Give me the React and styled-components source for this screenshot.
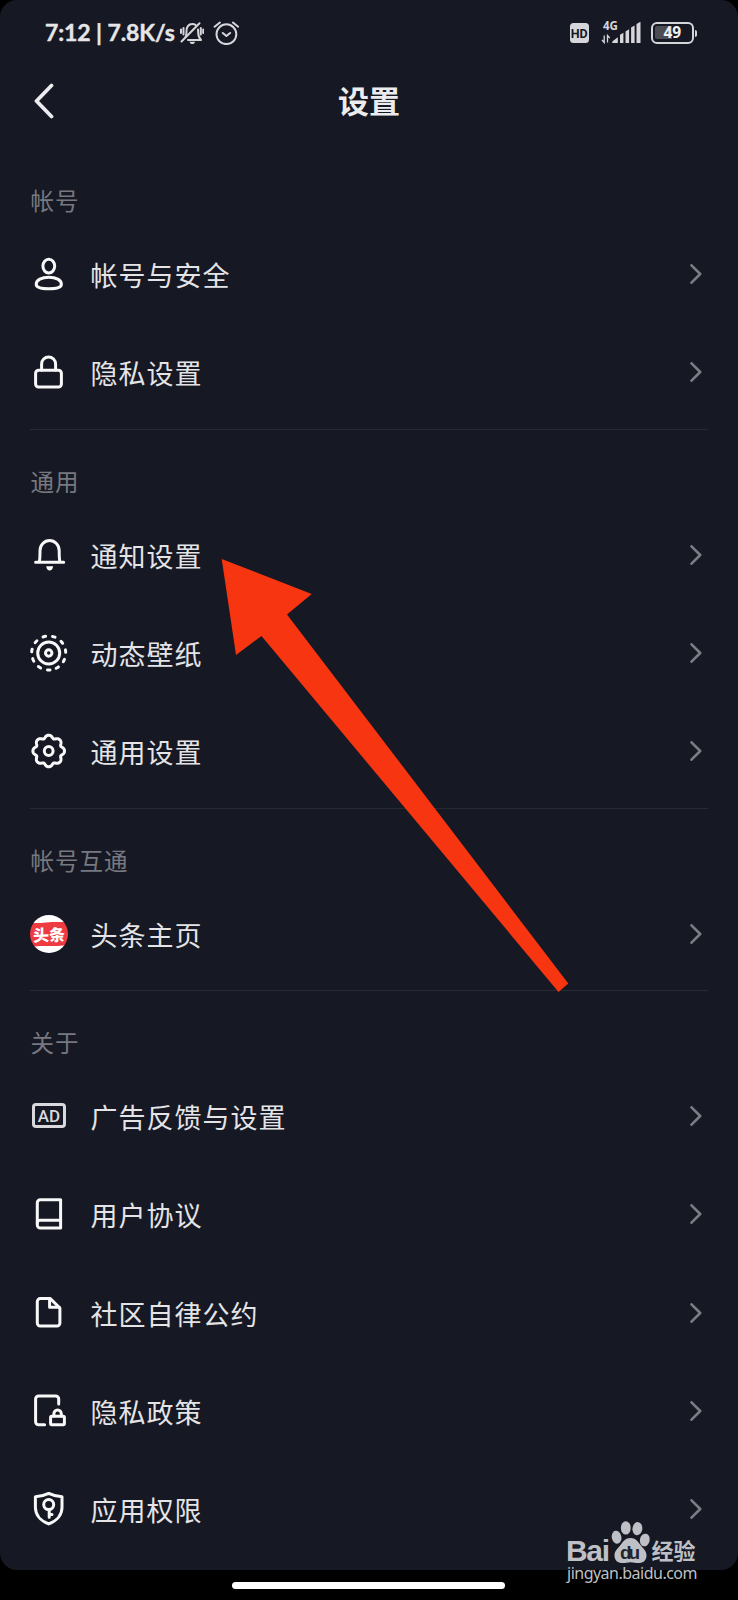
import React from "react";
import styled, { createGlobalStyle } from "styled-components";

const gearPath = () => {
  const points = [];
  for (let i = 0; i < 128; i++) {
    const a = (i / 128) * Math.PI * 2;
    const r = 14.6 + 1.4 * Math.cos(8 * a) - 0.2 * Math.cos(16 * a);
    points.push(
      `${(19.7 + r * Math.sin(a)).toFixed(2)} ${(20 - r * Math.cos(a)).toFixed(2)}`
    );
  }
  return `M${points.join("L")}Z`;
};

const icons = {
  user: (
    <>
      <ellipse cx="19.8" cy="12.1" rx="5.9" ry="6.9" />
      <path d="M19.8 23.2c7.2 0 12.6 2.9 12.6 7.1 0 3.7-5 4.5-12.6 4.5s-12.6-.8-12.6-4.5c0-4.2 5.4-7.1 12.6-7.1z" />
    </>
  ),
  lock: (
    <>
      <rect x="6.6" y="18.3" width="25.8" height="16.8" rx="3" />
      <path d="M12.6 18v-6a7 7 0 0 1 14 0V18" />
    </>
  ),
  bell: (
    <>
      <path d="M6.6 27.2h28.1M10.2 27c.8-2 .8-5.4.8-11.2a9.6 10.2 0 0 1 19.2 0c0 5.8 0 9.2.8 11.2" />
      <path d="M17.2 31.2h6.9c-.4 2.9-1.7 4.2-3.45 4.2s-3-1.3-3.45-4.2z" fill="#fff" stroke="none" />
    </>
  ),
  wallpaper: (
    <>
      <circle cx="19.7" cy="20" r="11" />
      <circle cx="19.7" cy="20" r="3.2" />
      <circle
        cx="19.7"
        cy="20"
        r="17"
        strokeDasharray="2.6 7.11"
        transform="rotate(85.6 19.7 20)"
      />
    </>
  ),
  gear: (
    <>
      <path d={gearPath()} />
      <circle cx="19.7" cy="20" r="4.4" />
    </>
  ),
  book: (
    <>
      <path d="M31.6 5.7H11.3a3 3 0 0 0-3 3v22.4a3 3 0 0 0 3 3h20.3z" />
      <path d="M8.3 28.9c0-1.6 1-2.7 2.8-2.7h20.5" />
    </>
  ),
  file: (
    <>
      <path d="M21.3 5.6h-10a3 3 0 0 0-3 3v21.5a3 3 0 0 0 3 3h16.6a3 3 0 0 0 3-3V15z" />
      <path d="M20.6 6v8.3h9.6" />
    </>
  ),
  fileLock: (
    <>
      <path d="M15.6 33.7h-6a3 3 0 0 1-3-3V7.9a3 3 0 0 1 3-3h17.1a3 3 0 0 1 3 3v5.2" />
      <rect x="21.6" y="25.3" width="13.8" height="8.4" rx="1.2" />
      <path d="M24.9 25v-2.2a3.7 3.8 0 0 1 7.4 0V25" />
    </>
  ),
  shield: (
    <>
      <path d="M19.7 4.4c-3.9 2-8.5 3-13.3 3.3v10.7c0 7.4 5.3 13.6 13.3 16.5 8-2.9 13.3-9.1 13.3-16.5V7.7c-4.8-.3-9.4-1.3-13.3-3.3z" />
      <circle cx="19.7" cy="15.6" r="5" />
      <path d="M20.2 21v7.3M20.6 25.4H23" />
    </>
  ),
};

const sections = [
  {
    title: "帐号",
    items: [
      { label: "帐号与安全", icon: "user" },
      { label: "隐私设置", icon: "lock" },
    ],
  },
  {
    title: "通用",
    items: [
      { label: "通知设置", icon: "bell" },
      { label: "动态壁纸", icon: "wallpaper" },
      { label: "通用设置", icon: "gear" },
    ],
  },
  {
    title: "帐号互通",
    items: [{ label: "头条主页", icon: "toutiao" }],
  },
  {
    title: "关于",
    items: [
      { label: "广告反馈与设置", icon: "ad" },
      { label: "用户协议", icon: "book" },
      { label: "社区自律公约", icon: "file" },
      { label: "隐私政策", icon: "fileLock" },
      { label: "应用权限", icon: "shield" },
    ],
  },
];

function ItemIcon({ name }) {
  if (name === "toutiao") {
    return (
      <IconSlot>
        <Toutiao>
          <span>头条</span>
        </Toutiao>
      </IconSlot>
    );
  }
  if (name === "ad") {
    return (
      <IconSlot>
        <AdBadge>AD</AdBadge>
      </IconSlot>
    );
  }
  return (
    <IconSlot>
      <LineIcon viewBox="0 0 40 40">{icons[name]}</LineIcon>
    </IconSlot>
  );
}

function StatusBar() {
  return (
    <Status>
      <Clock>7:12 | 7.8K/s</Clock>
      <StatusIcon $width={24} $gap={5} viewBox="0 0 24 24">
        <path d="M5.5 16c.9-1.5 1-3 1-5.5 0-4.8 2-7.5 5.8-7.5 1.2 0 2.3.3 3.2.9M18 8.5c.2 1 .2 1.8.2 3 0 3.5.8 5.5 2.8 7.5H8" />
        <path d="M1.5 20.5L19.5 2.3M1 8.5V12M3.5 7v6.5M20.8 7v6.500M23.2 8.5V12" />
        <path d="M9.5 20.7h5.6c-.4 1.7-1.5 2.3-2.8 2.3s-2.4-.6-2.8-2.3z" fill="#d6d6da" stroke="none" />
      </StatusIcon>
      <StatusIcon $width={26} $gap={9} viewBox="0 0 26 24">
        <circle cx="13.4" cy="13.2" r="9.9" />
        <path d="M9.8 12l3.6 3 3.7-3M1.6 5.700l5.300-4.200M25.200 5.700l-5.300-4.200" />
      </StatusIcon>
      <Spacer />
      <HdBadge>HD</HdBadge>
      <Signal viewBox="0 0 40 24">
        <text x="2" y="9.7">4G</text>
        <path d="M3.2 15.5v7L1 20M6.5 22.5v-7L8.7 18" fill="none" stroke="#d6d6da" strokeWidth="1.3" />
        <path d="M11.3 23v-1.5l5.500-4.200V23zM19 14.800l3.400-2v10.200H19zM24.500 11.400l3.600-2.200V23h-3.600zM30.100 7.500l3.500-2V23h-3.500zM35.500 4l4-2.300V23h-4z" />
      </Signal>
      <Battery>
        <span>49</span>
      </Battery>
      <BatteryTip />
    </Status>
  );
}

function Watermark() {
  return (
    <WatermarkSvg viewBox="0 0 140 66">
      <text x="3" y="41.4" className="bai" textLength="44">
        Bai
      </text>
      <ellipse cx="53.6" cy="17.2" rx="4.8" ry="6.5" transform="rotate(-12 53.6 17.2)" />
      <ellipse cx="62.8" cy="7.9" rx="4.9" ry="6.7" />
      <ellipse cx="74.4" cy="8.7" rx="4.9" ry="6.6" transform="rotate(8 74.4 8.7)" />
      <ellipse cx="81.8" cy="20" rx="4.9" ry="6.4" transform="rotate(12 81.8 20)" />
      <path d="M67.5 18c5 0 7.500 3.500 10 7s6 5.500 6 10.500-3.300 7.600-8 7.600c-3 0-5-.9-8-.9s-5 .9-8 .9c-4.700 0-8-2.600-8-7.600s3.500-7 6-10.500 5-7 10-7z" />
      <text x="57" y="38.5" className="du" textLength="20">
        du
      </text>
      <text x="88.5" y="39" className="cn" textLength="44">
        经验
      </text>
      <text x="4" y="59.2" className="url" textLength="130.5">
        jingyan.baidu.com
      </text>
    </WatermarkSvg>
  );
}

function App() {
  return (
    <Screen>
      <GlobalStyle />
      <Page>
        <StatusBar />
        <Header>
          <BackButton aria-label="返回">
            <svg width="20" height="36" viewBox="0 0 20 36">
              <path d="M17.5 2.500L2.500 18l15 15.500" />
            </svg>
          </BackButton>
          <h1>设置</h1>
        </Header>
        {sections.map(({ title, items }) => (
          <Section key={title}>
            <SectionTitle>{title}</SectionTitle>
            {items.map(({ label, icon }) => (
              <Row key={label}>
                <ItemIcon name={icon} />
                <Label>{label}</Label>
                <Chevron viewBox="0 0 12 20">
                  <path d="M1.5 1.300l8.700 8.700-8.700 8.700" />
                </Chevron>
              </Row>
            ))}
          </Section>
        ))}
      </Page>
      <HomeBar />
      <Arrow viewBox="0 0 348 434">
        <path d="M.7 0L90.7 35 66 55.5 347.3 424.5 337.5 433 40.5 77 15 96z" />
      </Arrow>
      <Watermark />
    </Screen>
  );
}

export default App;

const GlobalStyle = createGlobalStyle`
  body {
    margin: 0;
    background: #000;
    font-family: "Noto Sans CJK SC", sans-serif;
  }
`;

const Screen = styled.div`
  position: relative;
  display: flex;
  flex-direction: column;
  align-items: center;
  width: 738px;
  height: 1600px;
  overflow: hidden;
  background: #000;
`;

const Page = styled.main`
  box-sizing: border-box;
  width: 100%;
  height: 1569.5px;
  border-radius: 17px;
  background: #161823;
  overflow: hidden;
`;

const Status = styled.div`
  display: flex;
  align-items: center;
  box-sizing: border-box;
  height: 66px;
  padding: 0 41px 0 45px;
  color: #e6e6e9;
`;

const Clock = styled.span`
  width: 130px;
  padding-bottom: 2px;
  font: 700 23px/30px Lato, sans-serif;
  letter-spacing: -0.1px;
  white-space: nowrap;
  -webkit-text-stroke: 0.4px #e6e6e9;
`;

const StatusIcon = styled.svg`
  width: ${({ $width }) => $width}px;
  height: 24px;
  margin-left: ${({ $gap }) => $gap}px;
  fill: none;
  stroke: #d6d6da;
  stroke-width: 2;
  stroke-linecap: round;
  stroke-linejoin: round;
`;

const Spacer = styled.div`
  flex: 1;
`;

const HdBadge = styled.span`
  width: 19.5px;
  height: 20px;
  border-radius: 3.5px;
  background: #d6d6da;
  color: #161823;
  font: 700 12.5px/21px Roboto, sans-serif;
  text-align: center;
`;

const Signal = styled.svg`
  width: 40px;
  height: 24px;
  margin: 0 10px 3px 12px;
  overflow: visible;
  fill: #d6d6da;
  text {
    font: 700 11.5px "Open Sans", sans-serif;
  }
`;

const Battery = styled.span`
  box-sizing: border-box;
  width: 42.5px;
  height: 21.5px;
  border: 2.5px solid #d6d6da;
  border-radius: 6px;
  padding: 2px;
  color: #f0f0f2;
  font: 700 15.5px/13px "Noto Sans", sans-serif;
  text-align: center;
  span {
    display: block;
    border-radius: 2px;
    background: linear-gradient(90deg, #4b4c54 49%, transparent 49%);
  }
`;

const BatteryTip = styled.i`
  width: 2.5px;
  height: 7px;
  margin-left: 1px;
  border-radius: 0 2px 2px 0;
  background: #d6d6da;
`;

const Header = styled.header`
  display: grid;
  grid-template-columns: 80px 1fr 80px;
  align-items: center;
  height: 70px;
  margin-bottom: 13px;
  h1 {
    margin: 0;
    padding-bottom: 2px;
    color: #ececef;
    font-size: 31px;
    font-weight: 700;
    line-height: 40px;
    text-align: center;
  }
`;

const BackButton = styled.button`
  display: flex;
  padding: 0 0 0 33.5px;
  border: 0;
  background: transparent;
  cursor: pointer;
  svg {
    fill: none;
    stroke: #ececef;
    stroke-width: 3.8;
    stroke-linecap: round;
    stroke-linejoin: round;
  }
`;

const Section = styled.section`
  box-sizing: border-box;
  margin: 0 30px;
  padding-bottom: 7px;
  border-bottom: 1px solid #272933;
  &:last-child {
    border-bottom: 0;
  }
`;

const SectionTitle = styled.h2`
  box-sizing: border-box;
  height: 75.8px;
  margin: 0;
  padding: 34px 0 0 0.5px;
  color: #777880;
  font-size: 23.5px;
  font-weight: 400;
  line-height: 35px;
  letter-spacing: 1px;
`;

const Row = styled.div`
  display: flex;
  align-items: center;
  height: 98.4px;
`;

const IconSlot = styled.div`
  display: flex;
  align-items: center;
  justify-content: center;
  flex: none;
  width: 40px;
  height: 40px;
  margin-left: -1px;
`;

const LineIcon = styled.svg`
  width: 40px;
  height: 40px;
  fill: none;
  stroke: #f8f8f9;
  stroke-width: 3;
  stroke-linecap: round;
  stroke-linejoin: round;
`;

const Toutiao = styled.div`
  display: flex;
  align-items: center;
  justify-content: center;
  width: 38px;
  height: 38px;
  border-radius: 50%;
  background: linear-gradient(178deg, #fff 20%, #ee3b42 21%, #ee3b42 80%, #fff 81%);
  color: #fff;
  span {
    font-size: 16px;
    font-weight: 900;
    line-height: 22px;
    transform: rotate(-2deg);
    white-space: nowrap;
  }
`;

const AdBadge = styled.div`
  box-sizing: border-box;
  width: 34px;
  height: 25px;
  border: 3px solid #d9d9dd;
  border-radius: 4px;
  color: #d9d9dd;
  font: 500 17px/20px Roboto, sans-serif;
  text-align: center;
`;

const Label = styled.span`
  flex: 1;
  padding: 2px 0 0 21.6px;
  color: #e4e4e7;
  font-size: 27px;
  line-height: 40px;
  letter-spacing: 1px;
`;

const Chevron = styled.svg`
  width: 12px;
  height: 20px;
  margin-right: 5.6px;
  fill: none;
  stroke: #7c7d84;
  stroke-width: 2.6;
  stroke-linecap: round;
  stroke-linejoin: round;
`;

const HomeBar = styled.div`
  width: 273px;
  height: 7px;
  margin: 12px 1px 0 0;
  border-radius: 4px;
  background: #fff;
`;

/* pointer drawn over the list */
const Arrow = styled.svg`
  position: absolute;
  left: 221px;
  top: 559px;
  width: 348px;
  height: 434px;
  fill: #f73510;
`;

const WatermarkSvg = styled.svg`
  position: absolute;
  left: 563px;
  top: 1520px;
  width: 140px;
  height: 66px;
  fill: #bfc0c5;
  .bai {
    font: 700 30px "Liberation Sans", sans-serif;
  }
  .du {
    fill: #22242e;
    font: 700 19px "Liberation Sans", sans-serif;
  }
  .cn {
    font: 700 22px "Noto Sans CJK SC", sans-serif;
  }
  .url {
    font: 400 16px "Noto Sans", sans-serif;
  }
`;
